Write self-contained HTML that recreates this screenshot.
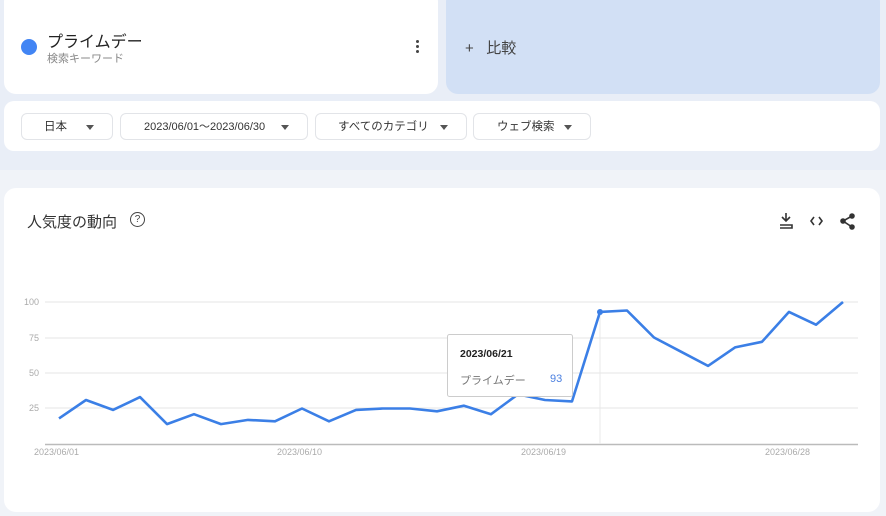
<!DOCTYPE html><html><head><meta charset="utf-8"><style>
body{margin:0;width:886px;height:516px;background:#f0f3f8;font-family:"Liberation Sans","Noto Sans CJK JP",sans-serif;position:relative;overflow:hidden}
.top{position:absolute;left:0;top:0;width:886px;height:170px;background:#e9eef7}
.card{position:absolute;background:#fff;border-radius:12px}
.chip{position:absolute;top:113px;height:27px;border:1px solid #e2e4e8;border-radius:6px;background:#fff;font-size:11.5px;color:#333;line-height:27px;box-sizing:border-box}
.chip:after{content:"";position:absolute;right:18px;top:11px;border:4px solid transparent;border-top:5px solid #555;border-bottom:0}
</style></head><body>
<div class="top"></div>
<div class="card" style="left:4px;top:-10px;width:434px;height:104px"></div>
<div style="position:absolute;left:21px;top:39px;width:16px;height:16px;border-radius:50%;background:#4285f4"></div>
<div style="position:absolute;left:47px;top:28px;font-size:16px;color:#222">プライムデー</div>
<div style="position:absolute;left:47px;top:50px;font-size:11px;color:#888">検索キーワード</div>
<div style="position:absolute;left:416px;top:40px;width:3px;height:3px;background:#444;border-radius:50%;box-shadow:0 5px 0 #444,0 10px 0 #444"></div>
<div style="position:absolute;left:446px;top:-10px;width:434px;height:104px;background:#d2e0f5;border-radius:12px"></div>
<div style="position:absolute;left:465px;top:37px;font-size:15px;color:#444">+&nbsp;&nbsp;&nbsp;比較</div>
<div class="card" style="left:4px;top:101px;width:876px;height:50px;border-radius:10px"></div>
<div class="chip" style="left:21px;width:92px;padding-left:22px">日本</div>
<div class="chip" style="left:120px;width:188px;padding-left:23px;font-size:11px">2023/06/01〜2023/06/30</div>
<div class="chip" style="left:315px;width:152px;padding-left:22px">すべてのカテゴリ</div>
<div class="chip" style="left:473px;width:118px;padding-left:23px">ウェブ検索</div>
<div class="card" style="left:4px;top:188px;width:876px;height:324px"></div>
<div style="position:absolute;left:27px;top:211px;font-size:15px;color:#333">人気度の動向</div>
<div style="position:absolute;left:130px;top:212px;width:13px;height:13px;border:1.5px solid #444;border-radius:50%;font-size:10px;line-height:13px;text-align:center;color:#444">?</div>
<svg style="position:absolute;left:0;top:0" width="886" height="516">
<g stroke="#333" stroke-width="1.6" fill="none">
<path d="M786 213v8M782 217l4 4 4-4M780 225h12v3h-12"/>
<path d="M814 217l-3 4 3 4M819 217l3 4-3 4"/>
<circle cx="852" cy="216" r="2" fill="#333"/><circle cx="843" cy="221" r="2" fill="#333"/><circle cx="852" cy="227" r="2" fill="#333"/><path d="M852 216l-9 5 9 6"/>
</g>
<g stroke="#e6e6e6" stroke-width="1"><line x1="45" y1="302" x2="858" y2="302"/><line x1="45" y1="338" x2="858" y2="338"/><line x1="45" y1="373" x2="858" y2="373"/><line x1="45" y1="408" x2="858" y2="408"/></g>
<line x1="45" y1="444.5" x2="858" y2="444.5" stroke="#bbb" stroke-width="1.5"/>
<line x1="600" y1="310" x2="600" y2="444" stroke="#e8e8e8"/>
<g font-size="9" fill="#aaa" font-family="Liberation Sans"><text x="39" y="305" text-anchor="end">100</text><text x="39" y="341" text-anchor="end">75</text><text x="39" y="376" text-anchor="end">50</text><text x="39" y="411" text-anchor="end">25</text>
<text x="34" y="455">2023/06/01</text><text x="277" y="455">2023/06/10</text><text x="521" y="455">2023/06/19</text><text x="765" y="455">2023/06/28</text></g>
<polyline fill="none" stroke="#3b7fe6" stroke-width="2.6" stroke-linejoin="round" points="59,418.4 86,400 113,409.9 140,397.1 167,424.1 194,414.2 221,424.1 248,419.9 275,421.3 302,408.5 329,421.3 356,409.9 383,408.5 410,408.5 437,411.3 464,405.7 491,414.2 518,394.3 545,400 572,401.4 600,311.9 627,310.5 654,337.5 681,351.7 708,365.9 735,347.4 762,341.8 789,311.9 816,324.7 843,302"/>
<circle cx="600" cy="312" r="3" fill="#3b7fe6"/>
<rect x="447.5" y="334.5" width="125" height="62" rx="2" fill="#fff" stroke="#ccc"/>
<text x="460" y="357" font-size="10.5" font-weight="bold" fill="#222" font-family="Liberation Sans">2023/06/21</text>
<text x="460" y="384" font-size="11" fill="#777" font-family="Liberation Sans,Noto Sans CJK JP">プライムデー</text>
<text x="550" y="382" font-size="11" fill="#4a7fe0" font-family="Liberation Sans">93</text>
</svg>
</body></html>
